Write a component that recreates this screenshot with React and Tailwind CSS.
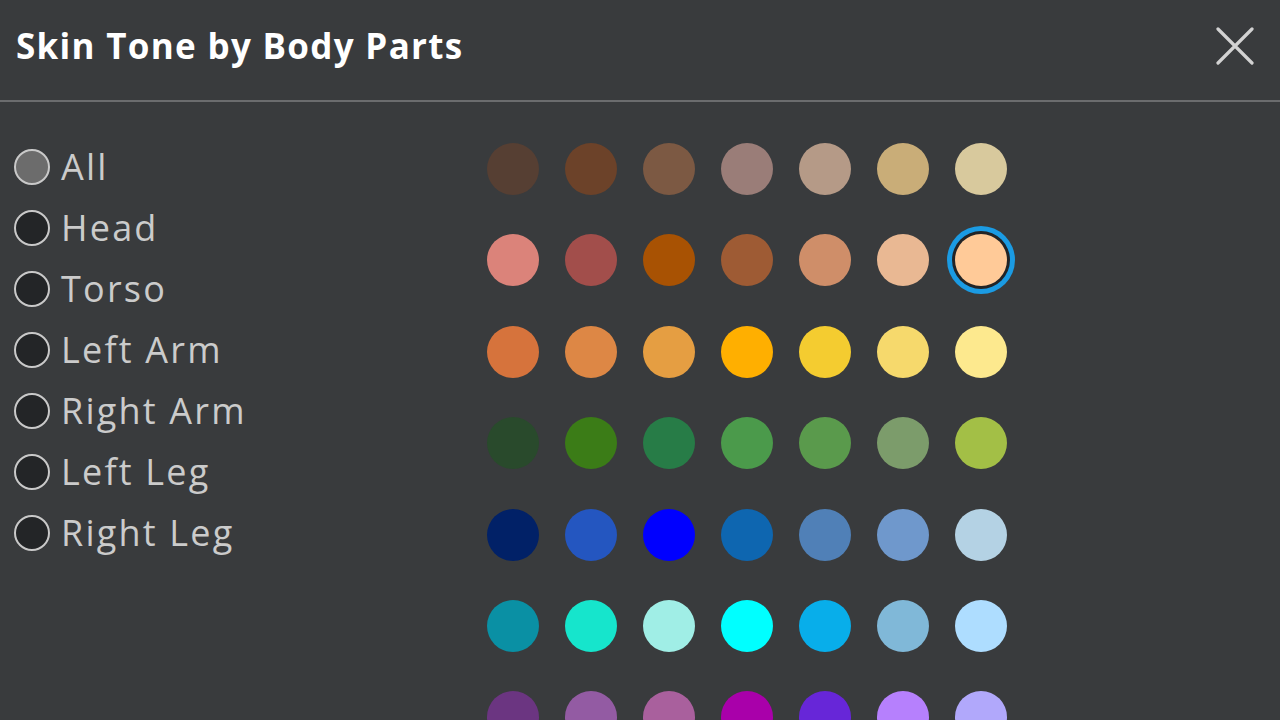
const PARTS = ['All', 'Head', 'Torso', 'Left Arm', 'Right Arm', 'Left Leg', 'Right Leg']

// swatch rows, top to bottom
const TONES = [
  ['#563f33', '#6c4229', '#7c5943', '#9a7d78', '#b59a87', '#c9ad78', '#d8c99d'],
  ['#db837a', '#a24e4b', '#a85203', '#9e5b34', '#cf8e69', '#e9b893', '#ffca98'],
  ['#d6733c', '#dd8745', '#e59e42', '#ffaf00', '#f4cc30', '#f6d96c', '#fde98e'],
  ['#294a2c', '#3b7c17', '#277c47', '#4b9a4b', '#5a9a4c', '#7c9c6b', '#a3bf46'],
  ['#012167', '#2456c0', '#0000ff', '#0e66b0', '#5080b7', '#6f98cc', '#b4d2e4'],
  ['#0a90a4', '#16e5cc', '#a0eee6', '#00ffff', '#08aeea', '#80b8d8', '#aeddff'],
  ['#6b3581', '#935ba3', '#a9609d', '#a900aa', '#6726d8', '#b680fd', '#b1a8fb'],
]

const SELECTED = '1-6'

function Radio({ label, checked }) {
  return (
    <div className="flex items-center h-[61px] gap-[11px]">
      <span
        className={`shrink-0 w-[36px] h-[36px] rounded-full border-2 border-[#c9c9c9] ${checked ? 'bg-[#6c6c6c]' : 'bg-[#232527]'}`}
      />
      <span className="text-[36px] text-[#cbcbcb] leading-none tracking-[2.2px]">{label}</span>
    </div>
  )
}

export default function App() {
  return (
    <div className="h-screen w-full overflow-hidden bg-[#393b3d] font-['Open_Sans',_'Liberation_Sans',_sans-serif]">
      <div className="flex items-center justify-between h-[102px] pl-[16px] pr-[26px] border-b-2 border-[#6b6c6e]">
        <h1 className="text-[35px] font-bold text-white tracking-[1.3px] leading-none -mt-[10px]">Skin Tone by Body Parts</h1>
        <svg width="38" height="38" viewBox="0 0 38 38" className="-mt-[8px]">
          <path d="M2 2 L36 36 M36 2 L2 36" stroke="#d2d2d2" strokeWidth="3.2" strokeLinecap="round" />
        </svg>
      </div>
      <div className="flex">
        <div className="w-[472px] pl-[14px] pt-[34px]">
          {PARTS.map((p, i) => (
            <Radio key={p} label={p} checked={i === 0} />
          ))}
        </div>
        <div className="pl-[15px] pt-[41px] grid grid-cols-7 gap-x-[26px] gap-y-[39.4px] content-start">
          {TONES.map((row, r) =>
            row.map((c, k) => (
              <div
                key={`${r}-${k}`}
                className={`w-[52px] h-[52px] rounded-full ${`${r}-${k}` === SELECTED ? 'ring-[5px] ring-[#1b9be3] ring-offset-[3px] ring-offset-[#222426]' : ''}`}
                style={{ backgroundColor: c }}
              />
            ))
          )}
        </div>
      </div>
    </div>
  )
}
